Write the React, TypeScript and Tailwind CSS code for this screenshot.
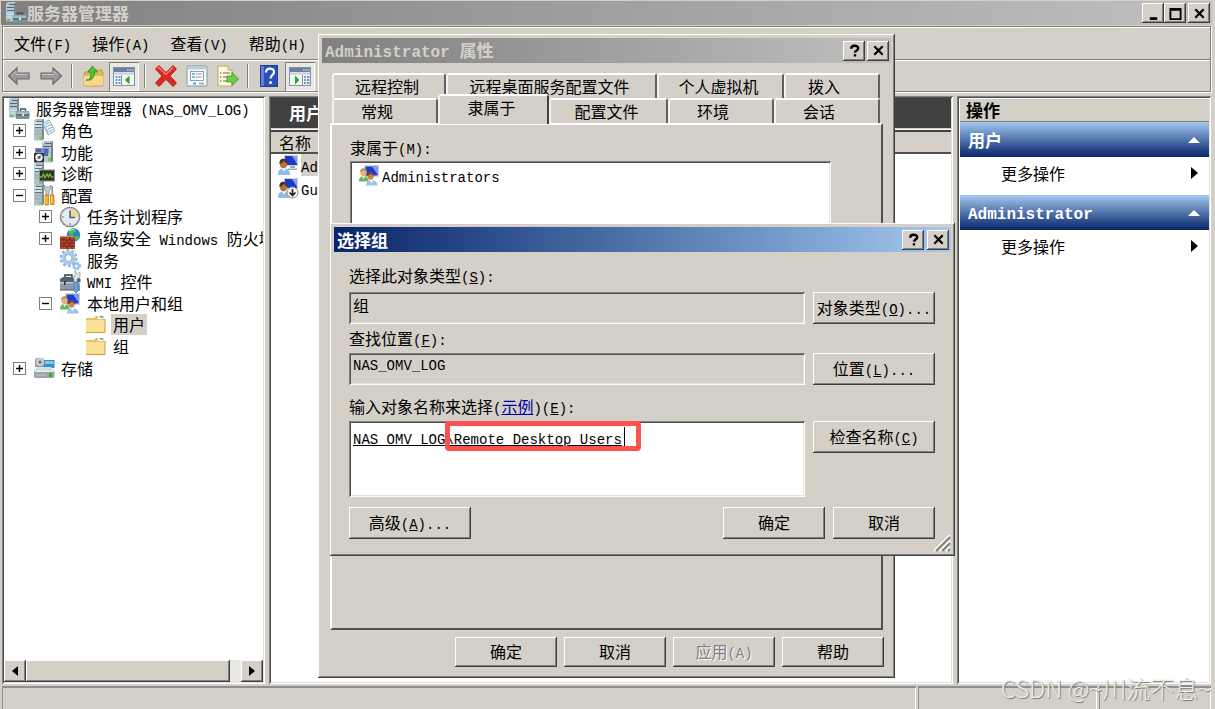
import type { ReactNode } from "react";

const RAISED =
  "bg-[#d4d0c8] shadow-[inset_-1px_-1px_#404040,inset_1px_1px_#ffffff,inset_-2px_-2px_#808080]";
const SUNKEN =
  "shadow-[inset_1px_1px_#808080,inset_-1px_-1px_#ffffff,inset_2px_2px_#505050,inset_-2px_-2px_#e4e2dc]";

// "&X" marks an accelerator key, latin runs are drawn in the mono face
function T({ children, bold }: { children: string; bold?: boolean }) {
  const latin = bold
    ? "font-['Liberation_Mono',monospace] text-[16px] leading-none"
    : "font-['Liberation_Mono',monospace] text-[14px] leading-none";
  const parts = children.split(/([\x20-\x7e]+)/).filter(Boolean);
  return (
    <span className="whitespace-pre">
      {parts.map((part, i) => {
        if (!/[\x20-\x7e]/.test(part)) return <span key={i}>{part}</span>;
        const at = part.indexOf("&");
        return (
          <span key={i} className={latin}>
            {at < 0 ? (
              part
            ) : (
              <>
                {part.slice(0, at)}
                <u>{part[at + 1]}</u>
                {part.slice(at + 2)}
              </>
            )}
          </span>
        );
      })}
    </span>
  );
}

/* ---------- icons ---------- */

function Svg({ children, className = "w-[22px] h-[22px]" }: { children: ReactNode; className?: string }) {
  return (
    <svg viewBox="0 0 22 22" className={`shrink-0 ${className}`} aria-hidden="true">
      {children}
    </svg>
  );
}

function Tower() {
  return (
    <>
      <path d="M1 1.5 3 0h8v20l-2 1.5H1z" fill="#aebfc8" />
      <path d="M9 1.5 11 0v20l-2 1.5z" fill="#7b8b94" />
      <path d="M1.5 2H9v6H1.5z" fill="#d5e2e8" />
      <path d="M3 2.5h6M2 5.5h7M2 8.5h7" stroke="#5d7380" strokeWidth="1" />
      <path d="M2 12h7M2 15h7" stroke="#94a8b3" strokeWidth="1" />
      <path d="M6.5 17.5h3v3h-3z" fill="#5fd23a" />
    </>
  );
}

function ServerIcon() {
  return (
    <Svg>
      <path d="M1 1.5 3 0h8v18l-2 1.5H1z" fill="#b4c6cf" />
      <path d="M9 1.5 11 0v18l-2 1.5z" fill="#7b8b94" />
      <path d="M4 2.5h6M2 5.5h7M2 8.5h7" stroke="#4f6573" />
      <path d="M2 12h7M2 15h5" stroke="#dfeaf0" />
      <path d="M2 17h3v2H2z" fill="#56c83a" />
      <path d="M12.5 13v-2h5v2" fill="none" stroke="#41515c" strokeWidth="1.3" />
      <rect x="8" y="13" width="13.5" height="8" rx="1" fill="#7d909c" />
      <path d="M8.5 13.5h12.5v2.5H8.5z" fill="#a9b9c3" />
      <path d="M8 17h13.5" stroke="#4b5b65" />
      <path d="M14 15.500h2v2.500h-2z" fill="#dfe6ea" />
    </Svg>
  );
}

function RolesIcon() {
  return (
    <Svg>
      <Tower />
      <path d="m10 4 6-3 6 11-7 4z" fill="#eef6fc" stroke="#7394ae" strokeWidth=".8" />
      <path d="m12 5.5 4-2M13 8l5-2.5M14.5 10.5l5-2.5M15.5 13l4-2" stroke="#7fa9cb" />
      <path d="M10 4c-1 1 0 3 1 4l4 8 1-1-5-10z" fill="#9dbbd2" />
    </Svg>
  );
}

function FeaturesIcon() {
  return (
    <Svg>
      <path d="M9 1.5 11 0h9v20l-2 1.5H9z" fill="#b4c6cf" />
      <path d="M18 1.5 20 0v20l-2 1.5z" fill="#74858f" />
      <path d="M12 2.5h6M10 5.5h8" stroke="#4f6573" />
      <path d="M15 17h3v3h-3z" fill="#5fd23a" />
      <path d="M2 7h14v5H2z" fill="#7d8fc4" />
      <path d="M3 8h5v3H3zM11 8h4v7h-4z" fill="#5268a8" />
      <rect x="1" y="12" width="10" height="9.5" fill="#30363b" />
      <circle cx="6" cy="16.5" r="3.7" fill="#eef1f3" />
      <circle cx="6" cy="16.5" r="1.5" fill="#5a6670" />
      <path d="m6 16.5 2-2" stroke="#333" />
    </Svg>
  );
}

function DiagnosticsIcon() {
  return (
    <Svg>
      <Tower />
      <rect x="6.5" y="7" width="15" height="11" fill="#30302c" stroke="#8b948d" />
      <path d="M7 14h2l1.5-3 1.5 4 2-4 1.5 3 1.5-3 1.5 3h2" fill="none" stroke="#69bf31" strokeWidth="1.3" />
    </Svg>
  );
}

function ConfigIcon() {
  return (
    <Svg>
      <Tower />
      <path d="M11 1v4l2 2v5h3V7l2-2V1l-2 2h-3z" fill="#c6cdd1" stroke="#7d878d" strokeWidth=".7" />
      <path d="M18.5 2h1.5v9h-1.5z" fill="#8c979e" />
      <path d="M12 11h3.5v10H12zM17.5 11h3.5v9.5h-3.5z" fill="#f0a815" stroke="#b8760a" strokeWidth=".7" />
      <path d="M13 12v8M18.5 12v7" stroke="#ffd970" />
    </Svg>
  );
}

function ClockIcon() {
  return (
    <Svg>
      <circle cx="11" cy="11" r="10.3" fill="#7f868b" />
      <circle cx="11" cy="11" r="8.7" fill="#e3edf4" stroke="#c0c6ca" />
      <path d="M11 11V3a8 8 0 0 1 8 8z" fill="#f8d391" />
      <path d="M11 4.5V11.5h5" fill="none" stroke="#46627c" strokeWidth="1.5" />
      <path d="M11 17v2M3 11h2" stroke="#778" />
    </Svg>
  );
}

function FirewallIcon() {
  return (
    <Svg>
      <circle cx="14.5" cy="7" r="6.8" fill="#2d7bd4" />
      <path d="M12 1c3-1 5 0 5 2s-3 1-3 3-3 2-4 0 0-4 2-5zM17 8c2-1 4 0 3 2s-3 3-4 1 0-2 1-3z" fill="#49c33c" />
      <path d="M10 3c2-2 4-2 5-2" stroke="#bfe3ff" strokeWidth="1.2" fill="none" />
      <path d="M1 8h14l1 2v11H1z" fill="#b5462f" />
      <path d="M1 8h14v1H1z" fill="#e08b70" />
      <path d="M1 12h15M1 15h15M1 18h15M5 9v3M11 9v3M8 12v3M13 12v3M5 15v3M11 15v3M8 18v3M13 18v3" stroke="#6d2416" />
    </Svg>
  );
}

function GearsIcon() {
  return (
    <Svg>
      <circle cx="9.5" cy="9" r="7.6" fill="none" stroke="#8fb9dc" strokeWidth="3" strokeDasharray="2.8 2" />
      <circle cx="9.5" cy="9" r="5.3" fill="none" stroke="#a9cbe8" strokeWidth="3.5" />
      <circle cx="9.5" cy="9" r="3.5" fill="#fff" stroke="#6b99c2" strokeWidth=".8" />
      <circle cx="17.5" cy="17" r="3.5" fill="none" stroke="#8fb9dc" strokeWidth="2" strokeDasharray="1.6 1.2" />
      <circle cx="17.5" cy="17" r="2.3" fill="#fff" stroke="#9bc1e0" strokeWidth="2" />
    </Svg>
  );
}

function ToolboxIcon() {
  return (
    <Svg>
      <path d="M6 7V4h7v3" fill="none" stroke="#30383e" strokeWidth="1.5" />
      <path d="M1 8 4 6h15l2.5 2v3H1z" fill="#54636e" />
      <path d="M1 11h20v8H1z" fill="#8c9ca8" />
      <path d="M1 11h20v1.5H1z" fill="#c0cbd2" />
      <path d="M1 19h20" stroke="#48565f" />
      <path d="M5 10h1.500v4H5z" fill="#27313a" />
      <path d="m16 0 2 3 3-2v5l-3 2v5h-3V8l-2-3 3 1z" fill="#e4e8ea" stroke="#7d868c" strokeWidth=".6" />
      <path d="M15 11h4v9l-2 2-2-2z" fill="#6ba5e0" stroke="#3a74ad" strokeWidth=".7" />
    </Svg>
  );
}

function UsersIcon() {
  return (
    <Svg>
      <path d="M6 1h15v12H6z" fill="#cfd3d4" />
      <path d="M7.5 2.5h12v9h-12z" fill="#2038cf" />
      <path d="m14 2.5h5.5v8z" fill="#7ba0f7" />
      <path d="M1 17.500c0-4 2-5.500 4.500-5.500s5 2 5 5.500z" fill="#6db556" />
      <path d="m4 12 1.500 3L7.500 12z" fill="#e8f3e2" />
      <ellipse cx="5.500" cy="8.500" rx="3.200" ry="3.800" fill="#e2b478" />
      <path d="M2 8c0-5 6.500-5 7-.5-2-.5-3.500-1.500-4-2-.5 1-1.500 2-3 2.500z" fill="#b08c45" />
      <path d="M8 21.5c0-4 2.500-5.500 5.500-5.500s6 1.500 6 5.500z" fill="#9cc6ec" />
      <path d="m11.500 16 2 3 2-3z" fill="#fff" />
      <ellipse cx="12.500" cy="12" rx="3.200" ry="3.800" fill="#c68553" />
      <path d="M9 12c-.5-5.500 7-5.500 7 0-1-.5-2.500-1.500-3-2.500-1 1-2.500 2-4 2.500z" fill="#6a4429" />
    </Svg>
  );
}

function UserIcon({ disabled }: { disabled?: boolean }) {
  return (
    <Svg>
      <path d="M7 1h14v11H7z" fill="#cdd1d3" />
      <path d="M8 2h12v9H8z" fill="#1d39cc" />
      <path d="m15 2h5v8z" fill="#7ba0f7" />
      <path d="M13 12h5v2h-5zM11 14.5h9V16h-9z" fill="#a4abb0" />
      <path d="M1 21c0-5 2-6.500 6-6.500s6 1.500 6 6.500z" fill="#8fbde8" />
      <path d="m5 14.500 2 3 2-3z" fill="#fff" />
      <ellipse cx="6.500" cy="10" rx="3.600" ry="4.300" fill="#b5703f" />
      <path d="M2.500 10c-1-7 8-7 8-.5-1.500-.5-3-1.500-3.500-3-1 2-2.500 3-4.500 3.500z" fill="#4b3023" />
      {disabled && (
        <>
          <circle cx="15.5" cy="15.5" r="5.5" fill="#f8f8f8" stroke="#8a8a8a" />
          <path d="M15.5 12v6M12.5 15.5l3 3 3-3" fill="none" stroke="#222" strokeWidth="1.7" />
        </>
      )}
    </Svg>
  );
}

function FolderIcon() {
  return (
    <Svg>
      <path d="M1 4h8l2-2h8v3h1v14H1z" fill="#e9c261" />
      <path d="M13 2.5h5.5V5H13z" fill="#fff" />
      <path d="M15 3h3" stroke="#4c9be0" strokeWidth="1.5" />
      <path d="M1 6h19v12.5H1z" fill="#fae096" />
      <path d="M1 18.5h19V5" fill="none" stroke="#c99c3d" />
    </Svg>
  );
}

function StorageIcon() {
  return (
    <Svg>
      <path d="M2 3c0-3 9-3 9 0v7H2z" fill="#8f9ca3" />
      <circle cx="7" cy="5" r="4" fill="#c4ced3" />
      <circle cx="7" cy="5" r="1.5" fill="#5c6a72" />
      <path d="M11 3h10.5v8H11z" fill="#3592c7" />
      <path d="M12 4h8.5v3H12z" fill="#79c7eb" />
      <path d="m1 14 3-4h14l3.5 4z" fill="#d7dde1" />
      <path d="M1 14h20.5v6l-1 1H2l-1-1z" fill="#9ba5ac" />
      <path d="M2 14.5h18.5" stroke="#f2f5f7" />
      <path d="M16 16h3v4h-3z" fill="#3fa92f" />
      <path d="M3 18h10" stroke="#c3cbd0" />
    </Svg>
  );
}

function ArrowIcon({ right }: { right?: boolean }) {
  return (
    <Svg className="w-6 h-[22px]">
      <path
        d={right ? "M21.5 11 13 3v5H1v6h12v5z" : "M.5 11 9 3v5h12v6H9v5z"}
        fill="#9a9a9a"
        stroke="#6b6b6b"
        strokeWidth="1.2"
      />
      <path d={right ? "M2 9.5h12V6l4 4" : "M20 9.5H8V6L4 10"} fill="none" stroke="#c4c4c4" />
    </Svg>
  );
}

function FolderUpIcon() {
  return (
    <Svg>
      <path d="M2 7h9l2-2h7l1 2v14H2z" fill="#e0b759" stroke="#b78b36" strokeWidth=".6" />
      <path d="M2 11h19v9.5H2z" fill="#f8d98a" />
      <path d="M4 15c4 0 5-2 5-8H5.5L10.5 1l5 6H12.5c0 6-3 9-8.5 8z" fill="#4fc634" stroke="#28841c" strokeWidth=".8" />
    </Svg>
  );
}

function PaneIcon({ right }: { right?: boolean }) {
  return (
    <Svg>
      <rect x=".5" y="2.5" width="21" height="18" fill="#f5f6f8" stroke="#8390a5" />
      <path d="M1 3h20v4H1z" fill="#6a7fa2" />
      <path d="M14 5h1.5M16.5 5H18M19 5h1.5" stroke="#fff" />
      <path d="M1 8.500h20" stroke="#c3ccda" strokeWidth="2" />
      <path d={right ? "M13.500 10v10" : "M8.500 10v10"} stroke="#8390a5" />
      <path
        d={right ? "M15 12h2M15 15h2M15 18h2M18 12h2.500M18 15h2.500M18 18h2.500" : "M2.500 12h2M2.500 15h2M2.500 18h2M5.500 12h2M5.500 15h2M5.500 18h2"}
        stroke="#4777bd"
        strokeWidth="1.3"
      />
      <path d={right ? "m6 10.5 4.500 4.500L6 19.500z" : "M16.500 10.500 12 15l4.500 4.500z"} fill="#29a529" />
    </Svg>
  );
}

function DeleteIcon() {
  return (
    <Svg>
      <path
        d="M4 .5 11 7.5 18 .5 21.5 4 15 11l6.5 7-3.5 3.5-7-7-7 7L.5 18 7 11 .5 4z"
        fill="#e02822"
        stroke="#a31712"
        strokeWidth=".8"
      />
      <path d="m3 3.5 1-1 7 7 7-7" fill="none" stroke="#f58d84" strokeWidth="1.2" />
    </Svg>
  );
}

function PropertiesIcon() {
  return (
    <Svg>
      <rect x="1" y="1" width="20" height="20" rx="1" fill="#f7fafc" stroke="#8396a8" />
      <path d="M2 2h18v2.5H2z" fill="#bccbd8" />
      <rect x="4.5" y="6.5" width="13" height="9" fill="#fff" stroke="#8ba0b3" />
      <path d="M6 9h3M6 12h3" stroke="#4ab3df" strokeWidth="1.5" />
      <path d="M10 9h6M10 12h6" stroke="#8293a3" />
      <path d="M7 18.5h3" stroke="#27b4e8" strokeWidth="2" />
      <path d="M13 18.5h5" stroke="#a2b1bd" strokeWidth="2" />
    </Svg>
  );
}

function ExportIcon() {
  return (
    <Svg>
      <path d="M1 1h10l4 4v16H1z" fill="#fff8dc" stroke="#b6a873" />
      <path d="M11 1v4h4" fill="#e8dba6" stroke="#b6a873" />
      <path d="M3 8h1.5M3 12h1.5M3 16h1.5" stroke="#888" strokeWidth="1.3" />
      <path d="M6 8h7M6 12h4M6 16h4" stroke="#9a9478" strokeWidth="1.3" />
      <path d="M10 11h5V7.5l6.5 6.5-6.5 6.5V17h-5z" fill="#6fd047" stroke="#2f8d20" strokeWidth=".8" />
    </Svg>
  );
}

function HelpIcon() {
  return (
    <Svg>
      <path d="M2 0h18v22H2z" fill="#2b50b8" />
      <path d="M2 0h4v22H2z" fill="#5b7fdd" />
      <path d="M2.5.5h17v21h-17z" fill="none" stroke="#1f3c91" />
      <path d="M8 7.5c0-5 8-5 8-.5 0 3-3.5 3-3.5 6.5" fill="none" stroke="#fff" strokeWidth="2.2" />
      <circle cx="12.5" cy="17.5" r="1.5" fill="#fff" />
    </Svg>
  );
}

/* ---------- small controls ---------- */

type Glyph = "min" | "max" | "close" | "help";

const GLYPHS: Record<Glyph, ReactNode> = {
  min: <path d="M3 12.5h8" strokeWidth="3" />,
  max: <path d="M1.5 2v11h11V2zM1 3h12" strokeWidth="2" />,
  close: <path d="m2.5 2.5 9 9m0-9-9 9" strokeWidth="2.4" />,
  help: <path d="M3.5 5c0-4 7.5-4 7.5-.5C11 7 7.5 7 7.5 9.5M7.5 11v2.5" strokeWidth="2.6" />,
};

const GLYPH_LABELS: Record<Glyph, string> = { min: "最小化", max: "最大化", close: "关闭", help: "帮助" };

function CaptionButton({ glyph }: { glyph: Glyph }) {
  return (
    <button aria-label={GLYPH_LABELS[glyph]} className={`flex items-center justify-center w-[22px] h-5 ${RAISED}`}>
      <svg viewBox="0 0 14 14" className="w-[13px] h-[13px]" fill="none" stroke="#000">
        {GLYPHS[glyph]}
      </svg>
    </button>
  );
}

function Button({ children, size = "w-[102px] h-[30px]", disabled }: { children: string; size?: string; disabled?: boolean }) {
  return (
    <button
      disabled={disabled}
      className={`shrink-0 flex items-center justify-center pb-0.5 ${RAISED} ${size} ${
        disabled ? "text-[#808080] [text-shadow:1px_1px_#fff]" : "text-black"
      }`}
    >
      <T>{children}</T>
    </button>
  );
}

function ToolButton({ label, pressed, children }: { label: string; pressed?: boolean; children: ReactNode }) {
  return (
    <button
      aria-label={label}
      className={
        pressed
          ? "shrink-0 flex items-center justify-center w-[30px] h-[29px] -mx-[3px] bg-[#eae8e3] shadow-[inset_1px_1px_#808080,inset_-1px_-1px_#ffffff]"
          : "shrink-0 flex items-center justify-center min-w-[23px] h-[29px]"
      }
    >
      {children}
    </button>
  );
}

function ToolSeparator() {
  return <div className="shrink-0 w-0.5 h-6 border-l border-[#808080] bg-white" />;
}

/* ---------- tree ---------- */

type Node = { level: number; label: string; icon: ReactNode; box?: "+" | "-"; selected?: boolean };

const NODES: Node[] = [
  { level: 0, label: "服务器管理器 (NAS_OMV_LOG)", icon: <ServerIcon /> },
  { level: 1, label: "角色", icon: <RolesIcon />, box: "+" },
  { level: 1, label: "功能", icon: <FeaturesIcon />, box: "+" },
  { level: 1, label: "诊断", icon: <DiagnosticsIcon />, box: "+" },
  { level: 1, label: "配置", icon: <ConfigIcon />, box: "-" },
  { level: 2, label: "任务计划程序", icon: <ClockIcon />, box: "+" },
  { level: 2, label: "高级安全 Windows 防火墙", icon: <FirewallIcon />, box: "+" },
  { level: 2, label: "服务", icon: <GearsIcon /> },
  { level: 2, label: "WMI 控件", icon: <ToolboxIcon /> },
  { level: 2, label: "本地用户和组", icon: <UsersIcon />, box: "-" },
  { level: 3, label: "用户", icon: <FolderIcon />, selected: true },
  { level: 3, label: "组", icon: <FolderIcon /> },
  { level: 1, label: "存储", icon: <StorageIcon />, box: "+" },
];

const INDENT = ["pl-1", "pl-[9px]", "pl-[35px]", "pl-[61px]"];

function TreeRow({ node }: { node: Node }) {
  return (
    <li className={`flex items-center ${INDENT[node.level]}`}>
      {node.level > 0 && (
        <span className="shrink-0 w-5">
          {node.box && (
            <button
              aria-label={node.box === "+" ? "展开" : "折叠"}
              className="flex items-center justify-center w-[13px] h-[13px] border border-[#808080] bg-white"
            >
              <svg viewBox="0 0 7 7" className="w-[7px] h-[7px]" stroke="#000" strokeWidth="1.4">
                <path d={node.box === "+" ? "M0 3.5h7M3.5 0v7" : "M0 3.5h7"} />
              </svg>
            </button>
          )}
        </span>
      )}
      {node.icon}
      <span className={`ml-1 px-0.5 leading-[21px] ${node.selected ? "bg-[#d4d0c8]" : ""}`}>
        <T>{node.label}</T>
      </span>
    </li>
  );
}

function TreePane() {
  return (
    <section className={`flex flex-col shrink-0 w-[263px] p-0.5 bg-white ${SUNKEN}`}>
      <ul className="grid auto-rows-fr h-[281px] overflow-hidden">
        {NODES.map((node, i) => (
          <TreeRow key={i} node={node} />
        ))}
      </ul>
      <div className="flex mt-auto h-[22px] bg-[#eae8e3]">
        <button aria-label="向左滚动" className={`flex items-center justify-center w-[22px] ${RAISED}`}>
          <svg viewBox="0 0 6 10" className="w-[6px] h-[10px]">
            <path d="M6 0v10L0 5z" />
          </svg>
        </button>
        <div className={`w-[204px] ${RAISED}`} />
        <button aria-label="向右滚动" className={`flex items-center justify-center w-[22px] ml-auto ${RAISED}`}>
          <svg viewBox="0 0 6 10" className="w-[6px] h-[10px]">
            <path d="M0 0v10l6-5z" />
          </svg>
        </button>
      </div>
    </section>
  );
}

/* ---------- middle and right panes ---------- */

function ListPane() {
  return (
    <section className={`flex flex-col flex-1 min-w-0 p-0.5 bg-white ${SUNKEN}`}>
      <h2 className="h-[30px] pl-[18px] leading-[30px] bg-[#404040] text-white text-[17px] font-bold">用户</h2>
      <div className="pt-px border-t border-[#d4d0c8]">
        <table className="w-full border-t-2 border-[#404040]">
          <thead>
            <tr className="bg-[#d4d0c8] border-b-2 border-[#505050]">
              <th className="p-0 pl-2 text-left font-normal leading-[20px]">名称</th>
            </tr>
          </thead>
          <tbody>
            <tr>
              <td className="p-0 pl-1.5">
                <span className="flex items-center gap-0.5 h-[22px]">
                  <UserIcon />
                  <span className="bg-[#d4d0c8] leading-[22px]">
                    <T>Administrator</T>
                  </span>
                </span>
              </td>
            </tr>
            <tr>
              <td className="p-0 pl-1.5">
                <span className="flex items-center gap-0.5 h-6">
                  <UserIcon disabled />
                  <T>Guest</T>
                </span>
              </td>
            </tr>
          </tbody>
        </table>
      </div>
    </section>
  );
}

function ActionGroup({ title }: { title: string }) {
  return (
    <div className="mb-[7px]">
      <h3 className="flex items-center justify-between h-[35px] pl-2 pr-[9px] bg-linear-to-b from-[#a6caf0] to-[#0a246a] text-white text-[17px] font-bold">
        <T bold>{title}</T>
        <svg viewBox="0 0 12 6" className="w-3 h-[6px]" fill="#fff">
          <path d="M6 0l6 6H0z" />
        </svg>
      </h3>
      <button className="flex items-center justify-between w-full h-[31px] pl-[41px] pr-[11px]">
        更多操作
        <svg viewBox="0 0 7 12" className="w-[7px] h-3">
          <path d="M0 0l7 6-7 6z" />
        </svg>
      </button>
    </div>
  );
}

function ActionsPane() {
  return (
    <section className={`shrink-0 w-[254px] pt-[3px] pl-[3px] pr-0.5 bg-white ${SUNKEN}`}>
      <h2 className="h-[23px] pl-1.5 leading-[22px] border-b border-[#808080] bg-[#d4d0c8] text-[17px] font-bold">操作</h2>
      <ActionGroup title="用户" />
      <ActionGroup title="Administrator" />
    </section>
  );
}

/* ---------- dialogs ---------- */

function Tab({ label, size, active }: { label: string; size: string; active?: boolean }) {
  return (
    <button
      role="tab"
      aria-selected={!!active}
      className={`${size} rounded-t-[3px] border-l-2 border-t-2 border-l-[#f4f2ee] border-t-white bg-[#d4d0c8] ${
        active
          ? "relative -mt-1 -mb-0.5 h-[30px] pb-1.5 border-r-2 border-r-[#404040]"
          : "h-[25px] pb-0.5 border-r-2 border-r-[#606060]"
      }`}
    >
      {label}
    </button>
  );
}

function PropertiesDialog() {
  return (
    <div
      role="dialog"
      aria-label="Administrator 属性"
      className={`absolute left-[318px] top-[34px] w-[577px] h-[644px] flex flex-col p-1 ${RAISED}`}
    >
      <div className="shrink-0 flex items-center h-[25px] pl-[3px] pr-0.5 bg-linear-to-r from-[#808080] to-[#c0c0c0] text-[#d4d0c8] text-[17px] font-bold">
        <T bold>Administrator 属性</T>
        <div className="flex gap-0.5 ml-auto">
          <CaptionButton glyph="help" />
          <CaptionButton glyph="close" />
        </div>
      </div>
      <div role="tablist" className="flex flex-col mt-2.5 px-2.5">
        <div className="flex">
          <Tab label="远程控制" size="w-[114px] pr-1" />
          <Tab label="远程桌面服务配置文件" size="w-[211px] pr-1" />
          <Tab label="个人虚拟机" size="w-[127px] pr-1" />
          <Tab label="拨入" size="w-[96px] pr-4" />
        </div>
        <div className="flex">
          <Tab label="常规" size="w-[106px] pr-4" />
          <Tab label="隶属于" size="w-[111px] pr-1" active />
          <Tab label="配置文件" size="w-[119px] pr-1" />
          <Tab label="环境" size="w-[106px] pr-4" />
          <Tab label="会话" size="w-[106px] pr-4" />
        </div>
      </div>
      <div
        role="tabpanel"
        className="flex-1 mx-2 px-[18px] pt-[11px] border-2 border-l-white border-t-white border-r-[#505050] border-b-[#505050]"
      >
        <h3 className="h-[22px] leading-[22px]">
          <T>隶属于(M):</T>
        </h3>
        <ul className={`w-[481px] h-[240px] mt-[3px] pt-[3px] pl-2 bg-white ${SUNKEN}`}>
          <li className="flex items-center gap-0.5">
            <UsersIcon />
            <T>Administrators</T>
          </li>
        </ul>
      </div>
      <div className="flex justify-end gap-[7px] py-[7px] pr-[7px]">
        <Button>确定</Button>
        <Button>取消</Button>
        <Button disabled>应用(A)</Button>
        <Button>帮助</Button>
      </div>
    </div>
  );
}

const FIELD = "flex-1 min-w-0 bg-[#d4d0c8] px-1 outline-none resize-none";
const WIDE = "w-[122px] h-8";
const TALL = "w-[102px] h-8";

function SelectGroupDialog() {
  return (
    <div
      role="dialog"
      aria-label="选择组"
      className={`absolute left-[330px] top-[223px] w-[625px] h-[333px] p-1 ${RAISED}`}
    >
      <div className="flex items-center h-[25px] pl-[3px] pr-0.5 bg-linear-to-r from-[#0a246a] to-[#a6caf0] text-white text-[17px] font-bold">
        选择组
        <div className="flex gap-[3px] ml-auto">
          <CaptionButton glyph="help" />
          <CaptionButton glyph="close" />
        </div>
      </div>
      <div className="pl-[15px] pr-4 pt-3">
        <label htmlFor="object-type" className="block h-[22px] leading-[22px]">
          <T>选择此对象类型(&S):</T>
        </label>
        <div className="flex gap-2 mt-1.5">
          <input id="object-type" readOnly value="组" className={`${FIELD} h-8 pb-1.5 ${SUNKEN}`} />
          <Button size={WIDE}>对象类型(&O)...</Button>
        </div>
        <label htmlFor="location" className="block h-[22px] mt-[3px] leading-[22px]">
          <T>查找位置(&F):</T>
        </label>
        <div className="flex gap-2 mt-1">
          <input
            id="location"
            readOnly
            value="NAS_OMV_LOG"
            className={`${FIELD} h-8 pb-1.5 font-['Liberation_Mono',monospace] text-[14px] ${SUNKEN}`}
          />
          <Button size={WIDE}>位置(&L)...</Button>
        </div>
        <div className="h-[22px] mt-2.5 leading-[22px]">
          <label htmlFor="names">输入对象名称来选择</label>
          <T>(</T>
          <a href="#examples" className="text-[#0000a0] underline">
            示例
          </a>
          <T>)(&E):</T>
        </div>
        <div className="flex gap-2 mt-1">
          <div className="relative flex flex-1 min-w-0">
            <textarea
              id="names"
              spellCheck={false}
              defaultValue={"NAS_OMV_LOG\\Remote Desktop Users"}
              className={`flex-1 h-[76px] px-1 pt-[9px] bg-white outline-none resize-none underline font-['Liberation_Mono',monospace] text-[14px] leading-[20px] ${SUNKEN}`}
            />
            {/* highlight around the group name */}
            <div className="absolute left-24 top-0 w-[196px] h-[30px] rounded-sm border-[5px] border-[#ff5050] pointer-events-none" />
            <div className="absolute left-[275px] top-[6px] w-px h-[19px] bg-black" />
          </div>
          <Button size={WIDE}>检查名称(&C)</Button>
        </div>
        <div className="flex gap-2 mt-2.5">
          <Button size={WIDE}>高级(&A)...</Button>
          <div className="flex gap-2 ml-auto">
            <Button size={TALL}>确定</Button>
            <Button size={TALL}>取消</Button>
          </div>
        </div>
      </div>
      <svg viewBox="0 0 18 18" className="absolute right-1 bottom-1 w-[18px] h-[18px]" strokeWidth="2">
        <path d="M1 17 17 1M7 17 17 7M13 17l4-4" stroke="#fff" />
        <path d="M3 17 17 3M9 17l8-8M15 17l2-2" stroke="#808080" />
      </svg>
    </div>
  );
}

/* ---------- main window ---------- */

const MENUS = ["文件(F)", "操作(A)", "查看(V)", "帮助(H)"];

export default function App() {
  return (
    <div className="relative flex flex-col h-screen overflow-hidden pt-px bg-[#d4d0c8] text-black text-[16px] leading-[20px] font-['Noto_Sans_CJK_SC',sans-serif]">
      <header className="shrink-0 flex items-center h-6 ml-px mr-[3px] pl-1 pr-0.5 bg-linear-to-r from-[#808080] to-[#c0c0c0] text-[#d4d0c8]">
        <ServerIcon />
        <h1 className="text-[17px] font-bold">服务器管理器</h1>
        <div className="flex ml-auto">
          <CaptionButton glyph="min" />
          <CaptionButton glyph="max" />
          <div className="ml-0.5">
            <CaptionButton glyph="close" />
          </div>
        </div>
      </header>

      <div className="shrink-0 mt-px ml-0.5 mr-1 border border-[#808080] shadow-[1px_1px_#ffffff,inset_1px_1px_#ffffff]">
        <nav className="flex items-center gap-[21px] h-[33px] pl-[11px] border-b border-[#808080]">
          {MENUS.map((menu) => (
            <button key={menu}>
              <T>{menu}</T>
            </button>
          ))}
        </nav>
        <div className="flex items-center gap-2 h-[31px] pl-1 border-t border-white">
          <ToolButton label="后退">
            <ArrowIcon />
          </ToolButton>
          <ToolButton label="前进">
            <ArrowIcon right />
          </ToolButton>
          <ToolSeparator />
          <ToolButton label="上一级">
            <FolderUpIcon />
          </ToolButton>
          <ToolButton label="显示/隐藏控制台树" pressed>
            <PaneIcon />
          </ToolButton>
          <ToolSeparator />
          <ToolButton label="删除">
            <DeleteIcon />
          </ToolButton>
          <ToolButton label="属性">
            <PropertiesIcon />
          </ToolButton>
          <ToolButton label="导出列表">
            <ExportIcon />
          </ToolButton>
          <ToolSeparator />
          <ToolButton label="帮助">
            <HelpIcon />
          </ToolButton>
          <ToolButton label="显示/隐藏操作窗格" pressed>
            <PaneIcon right />
          </ToolButton>
        </div>
      </div>

      <main className="flex flex-1 min-h-0 gap-1 mt-1 pl-0.5 pr-1">
        <TreePane />
        <ListPane />
        <ActionsPane />
      </main>

      <footer className="shrink-0 flex gap-0.5 h-[23px] mt-0.5 pl-0.5 pr-1">
        <div className="flex-1 shadow-[inset_1px_2px_#909090,inset_-1px_0_#ffffff]" />
        <div className="w-[179px] shadow-[inset_1px_2px_#909090,inset_-1px_0_#ffffff]" />
        <div className="w-[112px] shadow-[inset_1px_2px_#909090,inset_-1px_0_#ffffff]" />
      </footer>

      <PropertiesDialog />
      <SelectGroupDialog />

      <p className="absolute right-1 bottom-1.5 text-[24px] leading-[30px] font-light whitespace-nowrap text-[#f0eeea] [text-shadow:1px_1px_1px_#777] pointer-events-none">
        CSDN @~川流不息~
      </p>
    </div>
  );
}
